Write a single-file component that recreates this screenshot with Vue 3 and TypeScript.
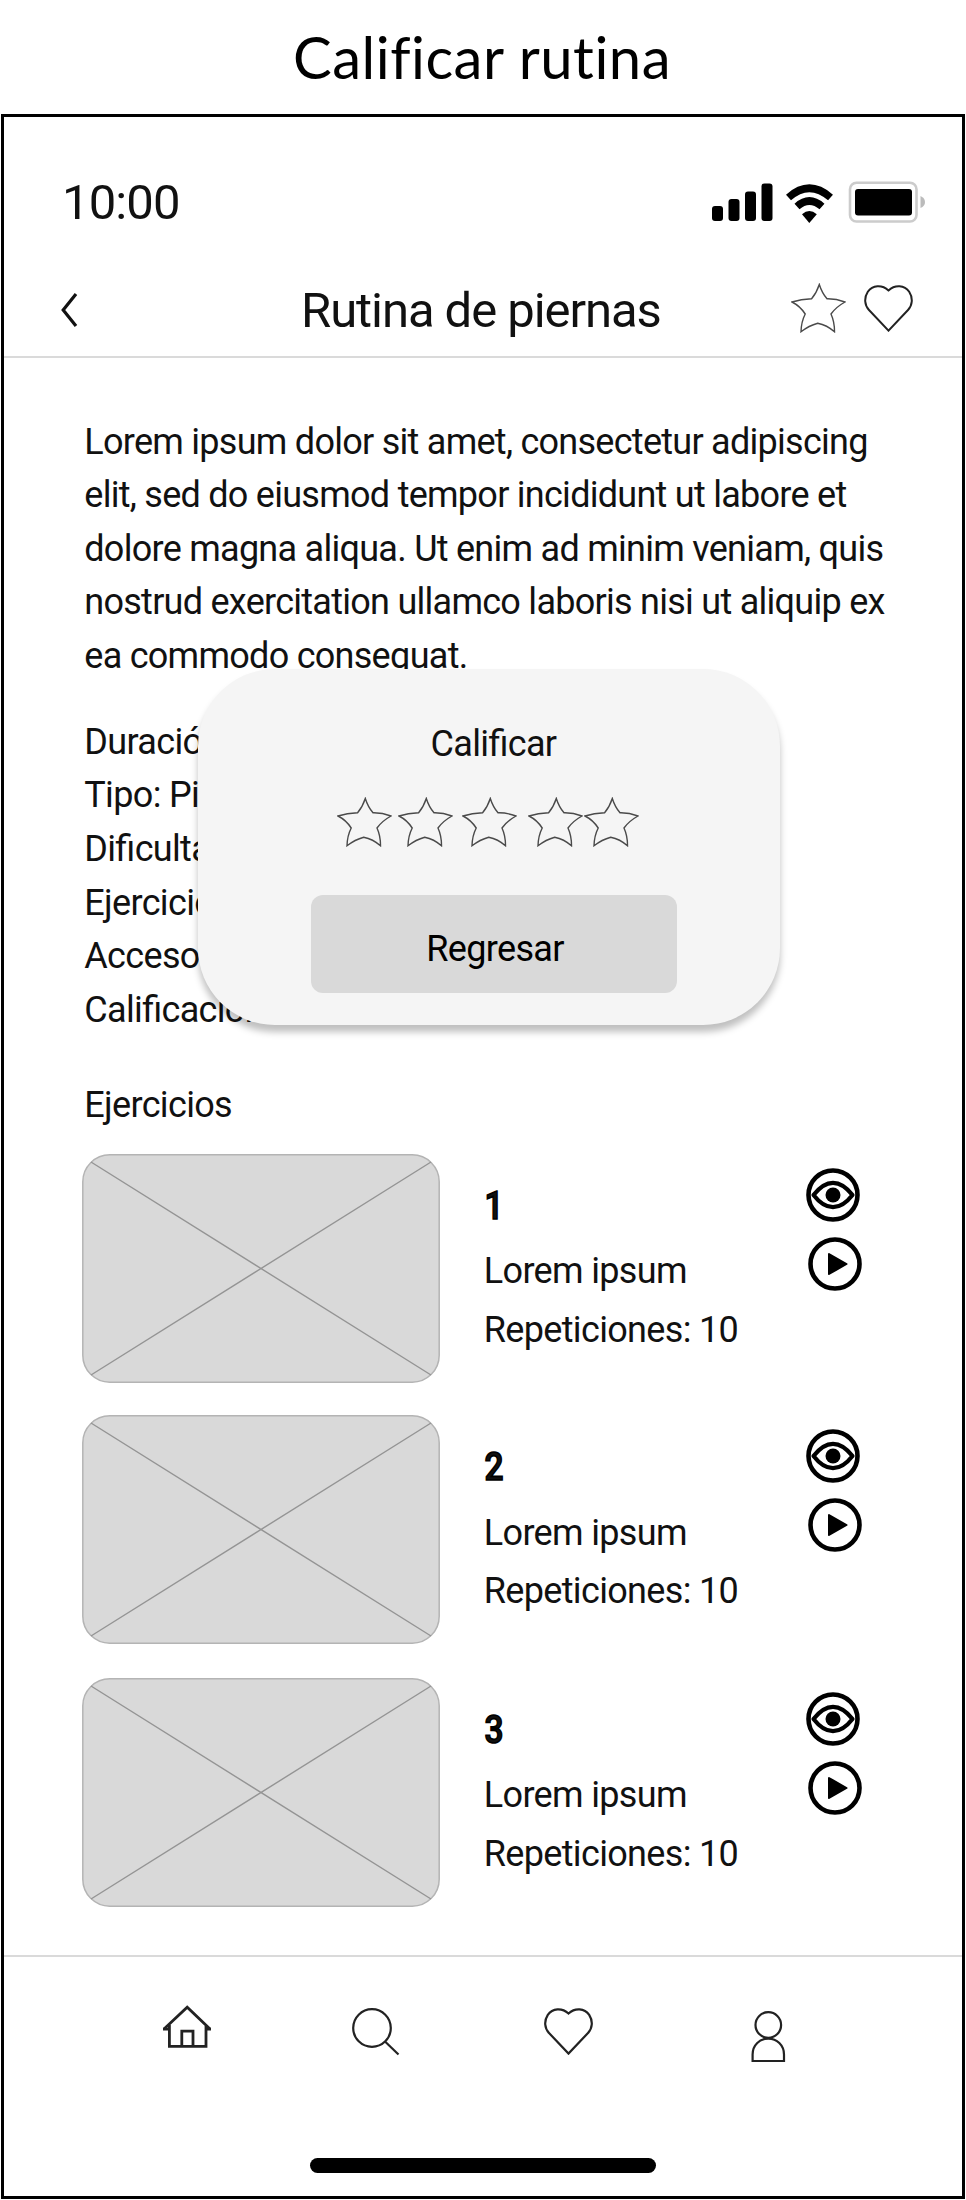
<script setup lang="ts">
interface Exercise {
  id: number
  name: string
  reps: number
}

const description: string[] = [
  'Lorem ipsum dolor sit amet, consectetur adipiscing',
  'elit, sed do eiusmod tempor incididunt ut labore et',
  'dolore magna aliqua. Ut enim ad minim veniam, quis',
  'nostrud exercitation ullamco laboris nisi ut aliquip ex',
  'ea commodo consequat.',
]

const details: string[] = ['Duración:', 'Tipo: Piernas', 'Dificultad:', 'Ejercicios:', 'Acceso:', 'Calificación:']

const exercises: Exercise[] = [
  { id: 1, name: 'Lorem ipsum', reps: 10 },
  { id: 2, name: 'Lorem ipsum', reps: 10 },
  { id: 3, name: 'Lorem ipsum', reps: 10 },
]

const starPath =
  'M28.3 1.5 Q31 10 36 15.8 Q45 15.6 54 19 Q45 24 40 31 Q43.6 39 43.5 48.8 Q36 42 26.7 40.2 Q18 42.5 10 48.8 Q10.2 39 14.2 31 Q9 23 1 19 Q10 16 20.6 15.8 Q25.5 10 28.3 1.5Z'
const heartPath =
  'M24.5 5.5 C18 -0.5 8.5 0 3.8 6.8 C-0.2 13 0.6 20.5 5 25 L24.5 45.6 L44 25 C48.4 20.5 49.2 13 45.2 6.8 C40.5 0 31 -0.5 24.5 5.5Z'
</script>

<template>
  <div class="page">
    <h1 class="page-title">Calificar rutina</h1>

    <main class="phone">
      <div class="status">
        <span class="time">10:00</span>
        <svg class="status-icons" width="214" height="43" viewBox="713 180 214 43">
          <rect x="713" y="205" width="11" height="15" rx="3" />
          <rect x="729.5" y="198" width="11" height="22" rx="3" />
          <rect x="746" y="190.5" width="11" height="29.5" rx="3" />
          <rect x="762.5" y="182.5" width="11" height="37.5" rx="3" />
          <path d="M789.5 196.5 Q810.3 178 831.5 196.5" fill="none" stroke="#000" stroke-width="7.5" />
          <path d="M798 205.5 Q810.3 194.5 823 205.5" fill="none" stroke="#000" stroke-width="7.5" />
          <path d="M803 213.3 Q810.3 206.5 817.8 213.3 L810.3 222Z" />
          <rect x="851" y="181.7" width="66.5" height="38.8" rx="6.5" fill="none" stroke="#ccc" stroke-width="2.6" />
          <rect x="856" y="188" width="57" height="26.5" rx="3" />
          <path d="M921.5 195 Q926 197 926 201 Q926 205 921.5 207Z" fill="#bbb" />
        </svg>
      </div>

      <header class="nav">
        <svg class="back" width="18" height="36" viewBox="0 0 18 36">
          <path d="M16 2 L3.2 18 L16 34" fill="none" stroke="#111" stroke-width="3.2" />
        </svg>
        <h2>Rutina de piernas</h2>
        <div class="nav-actions">
          <svg width="55" height="50" viewBox="0 0 55 50"><path class="star" :d="starPath" /></svg>
          <svg width="49" height="47" viewBox="0 0 49 47"><path class="heart" :d="heartPath" /></svg>
        </div>
      </header>

      <section class="content">
        <p class="description">
          <span v-for="line in description" :key="line">{{ line }}</span>
        </p>
        <ul class="details">
          <li v-for="item in details" :key="item">{{ item }}</li>
        </ul>
        <h3>Ejercicios</h3>

        <div class="exercises">
          <article v-for="ex in exercises" :key="ex.id" class="exercise">
            <svg class="thumb" width="358" height="229" viewBox="0 0 358 229">
              <rect x="0.8" y="0.8" width="356.4" height="227.4" rx="27" fill="#d9d9d9" stroke="#b4b4b4" stroke-width="1.5" />
              <path d="M9 8 L349 221 M349 8 L9 221" stroke="#949494" stroke-width="1.4" />
            </svg>
            <div class="info">
              <strong>{{ ex.id }}</strong>
              <span>{{ ex.name }}</span>
              <span>Repeticiones: {{ ex.reps }}</span>
            </div>
            <div class="actions">
              <svg width="54" height="54" viewBox="0 0 54 54">
                <circle cx="27" cy="27" r="24.5" fill="none" stroke="#000" stroke-width="4.6" />
                <path d="M7.5 27 Q17 14.8 27 14.8 Q37 14.8 46.5 27 Q37 39.2 27 39.2 Q17 39.2 7.5 27Z" fill="none" stroke="#000" stroke-width="4.2" stroke-linejoin="round" />
                <circle cx="27" cy="27" r="7.5" />
              </svg>
              <svg class="play" width="54" height="54" viewBox="0 0 54 54">
                <circle cx="27" cy="27" r="24.5" fill="none" stroke="#000" stroke-width="4.6" />
                <path d="M21 17 L38.5 27 L21 37Z" stroke="#000" stroke-width="2" stroke-linejoin="round" />
              </svg>
            </div>
          </article>
        </div>
      </section>

      <footer class="tabs">
        <div class="tab-icons">
          <svg class="home" width="50" height="44" viewBox="0 0 50 44">
            <path d="M1 24.2 H6.5 M43.5 24.2 H49" />
            <path d="M2 24 L25.2 2.2 L48 24 M7.4 20 V41.4 H44 V20 M19.8 41 V26.2 H31 V41" />
          </svg>
          <svg class="search" width="48" height="48" viewBox="0 0 48 48">
            <circle cx="20" cy="20" r="18.8" />
            <path d="M33 33.5 L46.5 46.5" />
          </svg>
          <svg class="like" width="49" height="47" viewBox="0 0 49 47"><path :d="heartPath" /></svg>
          <svg class="user" width="35" height="52" viewBox="0 0 35 52">
            <circle cx="17.3" cy="14" r="12.8" />
            <path d="M1.6 50 V43.5 C1.6 34 8.8 27.6 17.3 27.6 C25.8 27.6 33 34 33 43.5 V50Z" />
          </svg>
        </div>
        <div class="home-indicator"></div>
      </footer>

      <div class="modal" role="dialog">
        <h4>Calificar</h4>
        <div class="rating">
          <svg v-for="n in 5" :key="n" width="55" height="50" viewBox="0 0 55 50"><path class="star" :d="starPath" /></svg>
        </div>
        <button type="button">Regresar</button>
      </div>
    </main>
  </div>
</template>

<style>
body {
  margin: 0;
  background: #fff;
}
</style>

<style scoped>
.page {
  width: 966px;
  height: 2200px;
  overflow: hidden;
  background: #fff;
  color: #111;
  font-family: Roboto, 'Liberation Sans', sans-serif;
  font-size: 36px;
  letter-spacing: -0.66px;
  font-feature-settings: 'liga' 1;
}
h1, h2, h3, h4, p, ul {
  margin: 0;
  padding: 0;
  font-weight: 400;
  font-size: inherit;
}
svg {
  display: block;
  flex: none;
}
.page-title {
  height: 114px;
  line-height: 113px;
  padding-right: 2px;
  text-align: center;
  font-family: Lato, 'Open Sans', sans-serif;
  font-size: 58px;
  font-feature-settings: 'liga' 0;
  letter-spacing: 0.5px;
  color: #000;
}
.phone {
  position: relative;
  box-sizing: border-box;
  width: 964px;
  height: 2085px;
  margin-left: 1px;
  border: 3px solid #000;
  display: flex;
  flex-direction: column;
}
.status {
  flex: none;
  box-sizing: border-box;
  height: 135px;
  padding: 36px 36px 0 58px;
  display: flex;
  align-items: center;
  justify-content: space-between;
  font-size: 49px;
  letter-spacing: -0.9px;
}
.nav {
  flex: none;
  box-sizing: border-box;
  height: 106px;
  padding: 12px 49px 0 56px;
  border-bottom: 2px solid #dadada;
  display: grid;
  grid-template-columns: 241px 1fr auto;
  align-items: center;
}
.nav h2 {
  font-size: 49px;
  letter-spacing: -1.06px;
}
.nav-actions {
  display: flex;
  align-items: center;
  gap: 18px;
  margin-top: -4px;
}
.star {
  fill: none;
  stroke: #4a4a4a;
  stroke-width: 1.4;
}
.heart {
  fill: none;
  stroke: #222;
  stroke-width: 2;
}
.content {
  flex: none;
  box-sizing: border-box;
  height: 1597px;
  padding: 57.5px 0 0 78.3px;
}
.description {
  letter-spacing: -0.73px;
}
.description span,
.details li {
  display: block;
  height: 53.6px;
  padding-left: 2px;
  line-height: 53.6px;
  white-space: nowrap;
}
.details {
  margin-top: 32.4px;
  list-style: none;
}
.content h3 {
  margin-top: 42px;
  padding-left: 2px;
  line-height: 53.6px;
}
.exercises {
  margin-top: 20.9px;
  display: flex;
  flex-direction: column;
  gap: 32.5px;
}
.exercise {
  display: grid;
  grid-template-columns: 401.5px 321.9px 60px;
  height: 229px;
}
.exercise:last-child {
  margin-top: 1px;
}
.info {
  display: flex;
  flex-direction: column;
  padding-top: 20.6px;
  line-height: 58.4px;
}
.info strong {
  padding: 0 0 4.8px 0.5px;
  font-size: 38px;
  font-weight: 500;
  line-height: 62.8px;
  -webkit-text-stroke: 1.6px #000;
  transform: scaleX(0.88);
  transform-origin: left;
}
.actions {
  padding-top: 14px;
  display: flex;
  flex-direction: column;
  gap: 15px;
}
.play {
  margin-left: 2.3px;
}
.tabs {
  flex: 1;
  border-top: 2px solid #dadada;
  display: flex;
  flex-direction: column;
  align-items: center;
}
.tab-icons {
  align-self: stretch;
  display: flex;
  align-items: flex-start;
  padding: 48px 0 0 158px;
  height: 104px;
}
.tab-icons svg {
  fill: none;
  stroke: #222;
  stroke-width: 2.2;
}
.tab-icons .home {
  stroke-width: 2.8;
}
.search {
  margin: 2.5px 0 0 140.3px;
}
.like {
  margin: 2.5px 0 0 144.2px;
}
.user {
  margin: 5.5px 0 0 157.6px;
}
.home-indicator {
  width: 346px;
  height: 15px;
  margin-top: 48.5px;
  border-radius: 8px;
  background: #000;
}
.modal {
  position: absolute;
  left: 194px;
  top: 552px;
  box-sizing: border-box;
  width: 582px;
  height: 356px;
  padding-top: 48px;
  border-radius: 77px;
  background: #f5f5f5;
  box-shadow: 0 7px 7px rgba(0, 0, 0, 0.25);
}
.modal h4 {
  padding-left: 9px;
  line-height: 54px;
  text-align: center;
}
.rating {
  display: flex;
  margin: 26px 0 0 139.4px;
}
.rating svg:nth-child(2) {
  margin-left: 6px;
}
.rating svg:nth-child(3) {
  margin-left: 8.3px;
}
.rating svg:nth-child(4) {
  margin-left: 11px;
}
.rating svg:nth-child(5) {
  margin-left: 1.3px;
}
.modal button {
  display: block;
  width: 366px;
  height: 98px;
  margin: 48px 0 0 113px;
  padding: 10px 0 0 2px;
  border: 0;
  border-radius: 12px;
  background: #d9d9d9;
  color: #000;
  font: inherit;
  letter-spacing: inherit;
}
</style>
